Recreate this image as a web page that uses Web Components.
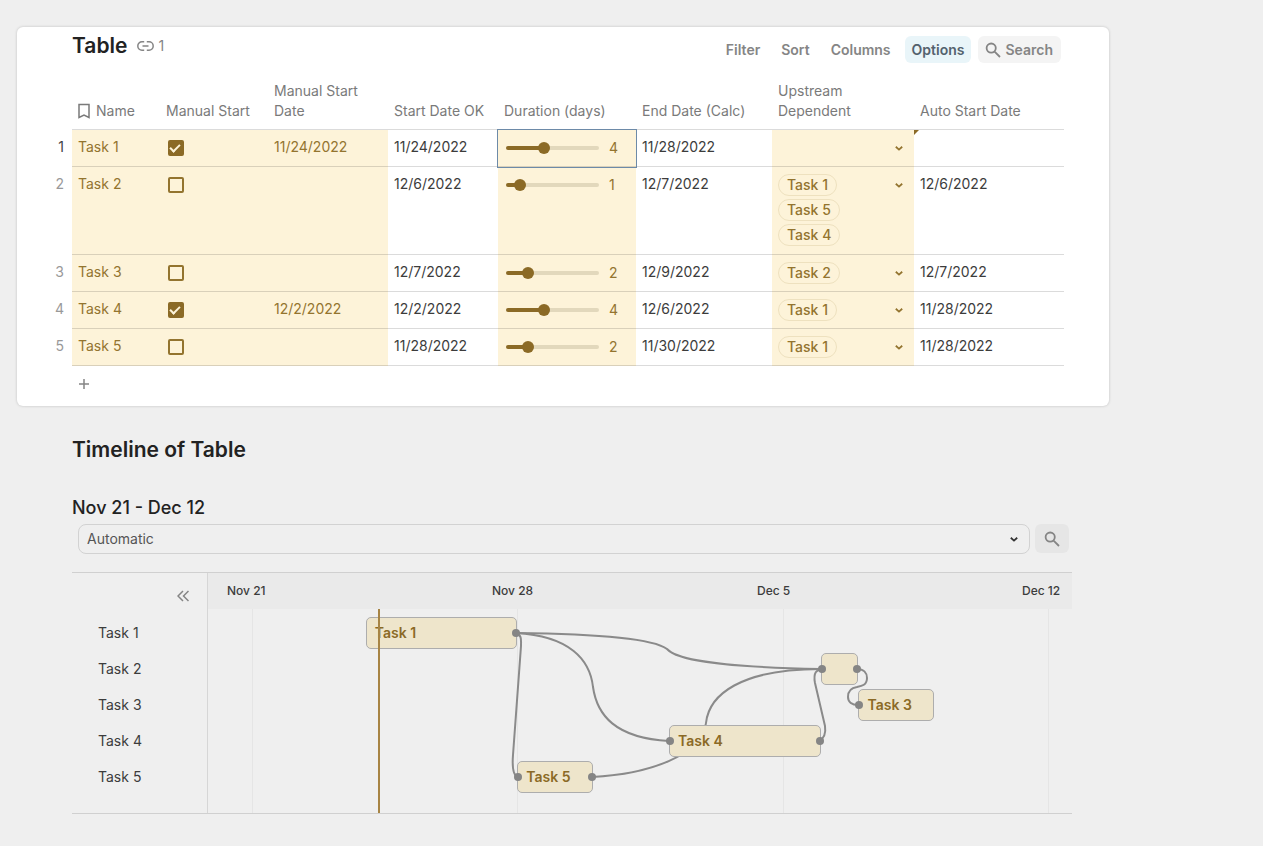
<!DOCTYPE html>
<html lang="en">
<head>
<meta charset="utf-8">
<title>Table and timeline</title>
<style>
    body {
        margin: 0;
        padding: 27px 154px 32px 17px;
        background: #efefef;
        color: #3c3c3c;
        font: 14px/20px Inter, "Liberation Sans", sans-serif;
        --gold: #8b6a26;
        --gold-text: #93742f;
        --cream: #fdf3d9;
        --line: rgba(0, 0, 0, 0.14);
    }
</style>
</head>
<body>
    <main-card>
        <view-title slot="title" links="1">Table</view-title>
        <table-toolbar slot="toolbar"></table-toolbar>
        <task-table></task-table>
    </main-card>
    <timeline-section>
        <view-title slot="title">Timeline of Table</view-title>
        <timeline-filter></timeline-filter>
        <timeline-chart></timeline-chart>
    </timeline-section>

<script>
const tasks = [
    { name: 'Task 1', manual: true, manualDate: '11/24/2022', start: '11/24/2022', days: 4, end: '11/28/2022', upstream: [], auto: '', offset: 3 },
    { name: 'Task 2', manual: false, manualDate: '', start: '12/6/2022', days: 1, end: '12/7/2022', upstream: ['Task 1', 'Task 5', 'Task 4'], auto: '12/6/2022', offset: 15 },
    { name: 'Task 3', manual: false, manualDate: '', start: '12/7/2022', days: 2, end: '12/9/2022', upstream: ['Task 2'], auto: '12/7/2022', offset: 16 },
    { name: 'Task 4', manual: true, manualDate: '12/2/2022', start: '12/2/2022', days: 4, end: '12/6/2022', upstream: ['Task 1'], auto: '11/28/2022', offset: 11 },
    { name: 'Task 5', manual: false, manualDate: '', start: '11/28/2022', days: 2, end: '11/30/2022', upstream: ['Task 1'], auto: '11/28/2022', offset: 7 }
];

const icons = {
    link: { w: 17, h: 12, d: 'M7.2 1.8H5A4.2 4.2 0 0 0 5 10.2H7.2M9.8 1.8H12A4.2 4.2 0 0 1 12 10.2H9.8M5.5 6H11.5' },
    search: { w: 16, h: 16, d: 'M6.2 1.5a4.6 4.6 0 1 0 0 9.2a4.6 4.6 0 1 0 0-9.2M9.6 9.6L15 15' },
    bookmark: { w: 12, h: 16, d: 'M1 1.5H11V14.5L6 12L1 14.5Z' },
    chevron: { w: 10, h: 10, d: 'M1.8 3.8L5 6.6L8.2 3.8' },
    collapse: { w: 12, h: 12, d: 'M6 1L1 6L6 11M11.5 1L6.5 6L11.5 11' },
    plus: { w: 10, h: 10, d: 'M5 0V10M0 5H10' }
};

class UiIcon extends HTMLElement {
    constructor() {
        super();
        this.attachShadow({ mode: 'open' });
    }

    connectedCallback() {
        const { w, h, d } = icons[this.getAttribute('name')];
        this.shadowRoot.innerHTML = `
            <style>
                :host {
                    display: inline-flex;
                    flex: none;
                }

                path {
                    fill: none;
                    stroke: currentColor;
                    stroke-width: var(--stroke, 1.8);
                }
            </style>
            <svg width="${w}" height="${h}" viewBox="0 0 ${w} ${h}" aria-hidden="true"><path d="${d}"/></svg>
        `;
    }
}

customElements.define('ui-icon', UiIcon);


class ViewTitle extends HTMLElement {
    constructor() {
        super();
        this.attachShadow({ mode: 'open' });
    }

    connectedCallback() {
        const links = this.getAttribute('links');
        this.shadowRoot.innerHTML = `
            <style>
                :host {
                    display: flex;
                    align-items: center;
                    gap: 10px;
                }

                h2 {
                    margin: 0;
                    font-size: 21px;
                    line-height: 28px;
                    font-weight: 600;
                    color: #222;
                }

                a {
                    display: flex;
                    align-items: center;
                    gap: 4px;
                    color: #858585;
                    text-decoration: none;
                    --stroke: 1.5;
                }
            </style>
            <h2><slot></slot></h2>
            ${links ? `<a href="#"><ui-icon name="link"></ui-icon>${links}</a>` : ''}
        `;
    }
}

customElements.define('view-title', ViewTitle);


class MainCard extends HTMLElement {
    constructor() {
        super();
        this.attachShadow({ mode: 'open' });
        this.shadowRoot.innerHTML = `
            <style>
                :host {
                    display: block;
                    padding: 5px 45px 5px 27px;
                    background: #fff;
                    border-radius: 6px;
                    box-shadow: 0 0 3px rgba(0, 0, 0, 0.2);
                }

                header {
                    display: flex;
                    justify-content: space-between;
                    align-items: flex-start;
                    padding: 0 3px 0 28px;
                    margin-bottom: 18px;
                }
            </style>
            <header>
                <slot name="title"></slot>
                <slot name="toolbar"></slot>
            </header>
            <slot></slot>
        `;
    }
}

customElements.define('main-card', MainCard);


class TableToolbar extends HTMLElement {
    constructor() {
        super();
        this.attachShadow({ mode: 'open' });
        this.shadowRoot.innerHTML = `
            <style>
                :host {
                    display: flex;
                    gap: 7px;
                    padding-top: 4px;
                }

                button {
                    all: unset;
                    display: flex;
                    align-items: center;
                    gap: 4px;
                    height: 27px;
                    padding: 0 7px;
                    border-radius: 6px;
                    font-weight: 600;
                    color: #858585;
                }

                .active {
                    background: #e9f5f9;
                    color: #54626e;
                }

                .search {
                    padding-right: 8px;
                    background: #f4f4f4;
                }
            </style>
            <button>Filter</button>
            <button>Sort</button>
            <button>Columns</button>
            <button class="active">Options</button>
            <button class="search"><ui-icon name="search"></ui-icon>Search</button>
        `;
    }
}

customElements.define('table-toolbar', TableToolbar);


class DurationSlider extends HTMLElement {
    constructor() {
        super();
        this.attachShadow({ mode: 'open' });
    }

    connectedCallback() {
        const days = this.getAttribute('days');
        const label = this.getAttribute('label');
        this.shadowRoot.innerHTML = `
            <style>
                :host {
                    display: flex;
                    align-items: center;
                    gap: 10px;
                    padding-left: 2px;
                    color: var(--gold-text);
                }

                input {
                    appearance: none;
                    width: 93px;
                    height: 12px;
                    margin: 0;
                    background: none;
                }

                input::-webkit-slider-runnable-track {
                    height: 4px;
                    border-radius: 2px;
                    background: linear-gradient(var(--gold), var(--gold)) 0 0 / var(--fill) 100% no-repeat #e2d8bc;
                }

                input::-webkit-slider-thumb {
                    appearance: none;
                    width: 12px;
                    height: 12px;
                    margin-top: -4px;
                    border-radius: 50%;
                    background: var(--gold);
                }
            </style>
            <input type="range" min="0" max="10" value="${days}" aria-label="${label}">
            <span>${days}</span>
        `;
        const input = this.shadowRoot.querySelector('input');
        const span = this.shadowRoot.querySelector('span');
        const update = () => {
            input.style.setProperty('--fill', `${input.value * 10}%`);
            span.innerText = input.value;
        };
        input.oninput = update;
        update();
    }
}

customElements.define('duration-slider', DurationSlider);


class TaskPicker extends HTMLElement {
    constructor() {
        super();
        this.attachShadow({ mode: 'open' });
        this.shadowRoot.innerHTML = `
            <style>
                :host {
                    display: flex;
                    justify-content: space-between;
                    align-items: flex-start;
                    padding-right: 4px;
                }

                div {
                    display: flex;
                    flex-direction: column;
                    align-items: flex-start;
                    gap: 3px;
                }

                ::slotted(span) {
                    padding: 0 8px;
                    border: 1px solid #eee1bf;
                    border-radius: 11px;
                    font-weight: 500;
                }

                button {
                    all: unset;
                    display: flex;
                    align-items: center;
                    height: 22px;
                }
            </style>
            <div><slot></slot></div>
            <button aria-label="Choose upstream tasks"><ui-icon name="chevron"></ui-icon></button>
        `;
    }
}

customElements.define('task-picker', TaskPicker);


class TaskTable extends HTMLElement {
    constructor() {
        super();
        this.attachShadow({ mode: 'open' });
        this.shadowRoot.innerHTML = `
            <style>
                :host {
                    display: block;
                }

                table {
                    width: 100%;
                    table-layout: fixed;
                    border-spacing: 0;
                }

                th, td {
                    box-sizing: border-box;
                    padding: 7px 6px 0;
                    border-bottom: 1px solid var(--line);
                    text-align: left;
                    vertical-align: top;
                }

                th {
                    padding: 0 6px 8px;
                    vertical-align: bottom;
                    font-weight: 400;
                    color: #7a7a7a;
                }

                td {
                    height: 37px;
                }

                .tall td {
                    height: 88px;
                }

                th.num, td.num {
                    padding-right: 8px;
                    border: 0;
                    text-align: right;
                    color: #999;
                }

                tr:first-child td.num {
                    color: #444;
                }

                .edit {
                    background: var(--cream);
                    color: var(--gold-text);
                }

                .selected {
                    outline: 1px solid #6d8aa8;
                }

                .flag {
                    position: relative;
                }

                .flag::before {
                    content: "";
                    position: absolute;
                    top: 0;
                    left: 0;
                    border-top: 5px solid var(--gold);
                    border-right: 5px solid transparent;
                }

                .name {
                    display: flex;
                    align-items: center;
                    gap: 6px;
                    --stroke: 1.5;
                }

                label {
                    display: flex;
                    align-items: center;
                    height: 22px;
                    padding-left: 2px;
                }

                input {
                    appearance: none;
                    box-sizing: border-box;
                    width: 16px;
                    height: 16px;
                    margin: 0;
                    border: 2px solid var(--gold-text);
                    border-radius: 2px;
                }

                input:checked {
                    background: var(--gold);
                    border-color: var(--gold);
                }

                input:checked::before {
                    content: "";
                    display: block;
                    width: 8px;
                    height: 4px;
                    margin-top: 2px;
                    border: solid var(--cream);
                    border-width: 0 0 2px 2px;
                    transform: rotate(-45deg);
                }

                duration-slider {
                    height: 22px;
                }

                .add {
                    all: unset;
                    display: flex;
                    align-items: center;
                    height: 35px;
                    padding-left: 35px;
                    color: #858585;
                    --stroke: 1.5;
                }
            </style>
            <table>
                <colgroup>
                    <col width="28"><col width="88"><col width="108"><col width="120"><col width="110">
                    <col width="138"><col width="136"><col width="142"><col>
                </colgroup>
                <thead>
                    <tr>
                        <th class="num"></th>
                        <th><span class="name"><ui-icon name="bookmark"></ui-icon>Name</span></th>
                        <th>Manual Start</th>
                        <th>Manual Start Date</th>
                        <th>Start Date OK</th>
                        <th>Duration (days)</th>
                        <th>End Date (Calc)</th>
                        <th>Upstream Dependent</th>
                        <th>Auto Start Date</th>
                    </tr>
                </thead>
                <tbody></tbody>
            </table>
            <button class="add" aria-label="Add row"><ui-icon name="plus"></ui-icon></button>
        `;

        this.shadowRoot.querySelector('tbody').innerHTML = tasks.map((task, i) => `
            <tr class="${task.upstream.length > 1 ? 'tall' : ''}">
                <td class="num">${i + 1}</td>
                <td class="edit">${task.name}</td>
                <td class="edit"><label><input type="checkbox" aria-label="Manual start, ${task.name}" ${task.manual ? 'checked' : ''}></label></td>
                <td class="edit">${task.manualDate}</td>
                <td>${task.start}</td>
                <td class="edit ${i === 0 ? 'selected' : ''}"><duration-slider days="${task.days}" label="Duration, ${task.name}"></duration-slider></td>
                <td>${task.end}</td>
                <td class="edit"><task-picker>${task.upstream.map(name => `<span>${name}</span>`).join('')}</task-picker></td>
                <td class="${i === 0 ? 'flag' : ''}">${task.auto}</td>
            </tr>
        `).join('');
    }
}

customElements.define('task-table', TaskTable);


class TimelineSection extends HTMLElement {
    constructor() {
        super();
        this.attachShadow({ mode: 'open' });
        this.shadowRoot.innerHTML = `
            <style>
                :host {
                    display: block;
                    margin: 30px 37px 0 55px;
                }

                h3 {
                    margin: 32px 0 4px;
                    font-size: 18px;
                    line-height: 24px;
                    font-weight: 500;
                    color: #222;
                }
            </style>
            <slot name="title"></slot>
            <h3>Nov 21 - Dec 12</h3>
            <slot></slot>
        `;
    }
}

customElements.define('timeline-section', TimelineSection);


class TimelineFilter extends HTMLElement {
    constructor() {
        super();
        this.attachShadow({ mode: 'open' });
        this.shadowRoot.innerHTML = `
            <style>
                :host {
                    display: flex;
                    gap: 5px;
                    padding: 0 3px 0 6px;
                    margin-bottom: 18px;
                }

                .field {
                    flex: 1;
                    display: grid;
                    align-items: center;
                }

                select, ui-icon {
                    grid-area: 1 / 1;
                }

                select {
                    appearance: none;
                    height: 30px;
                    padding: 0 8px;
                    border: 1px solid #d2d2d2;
                    border-radius: 8px;
                    background: none;
                    font: inherit;
                    color: #555;
                }

                .field ui-icon {
                    justify-self: end;
                    margin-right: 11px;
                    color: #333;
                    pointer-events: none;
                }

                button {
                    all: unset;
                    display: flex;
                    align-items: center;
                    justify-content: center;
                    width: 34px;
                    height: 29px;
                    border-radius: 6px;
                    background: #e6e6e6;
                    color: #858585;
                }
            </style>
            <div class="field">
                <select aria-label="Zoom level"><option>Automatic</option></select>
                <ui-icon name="chevron"></ui-icon>
            </div>
            <button aria-label="Search"><ui-icon name="search"></ui-icon></button>
        `;
    }
}

customElements.define('timeline-filter', TimelineFilter);


class TimelineChart extends HTMLElement {
    constructor() {
        super();
        this.attachShadow({ mode: 'open' });
        this.shadowRoot.innerHTML = `
            <style>
                :host {
                    display: grid;
                    grid-template-columns: 136px 1fr;
                    border-top: 1px solid #d0d0d0;
                    border-bottom: 1px solid #d0d0d0;
                }

                .names {
                    border-right: 1px solid #d6d6d6;
                }

                .collapse {
                    all: unset;
                    display: flex;
                    align-items: center;
                    justify-content: flex-end;
                    width: 117px;
                    height: 46px;
                    color: #858585;
                    --stroke: 1.5;
                }

                ul {
                    margin: -4px 0 0;
                    padding: 0 0 16px 26px;
                    list-style: none;
                    line-height: 36px;
                }

                .weeks {
                    display: grid;
                    grid-template-columns: repeat(3, 1fr) 50px;
                    padding-left: 19px;
                    background: #eaeaea;
                    font-size: 12px;
                    line-height: 36px;
                    font-weight: 500;
                }

                .canvas {
                    position: relative;
                    display: grid;
                    grid-template-columns: repeat(21, 1fr);
                    grid-auto-rows: 32px;
                    row-gap: 4px;
                    margin: 0 24px 0 44px;
                    padding: 8px 0 20px;
                }

                svg, .tick, .today {
                    position: absolute;
                    top: 0;
                    height: 100%;
                }

                svg {
                    left: 0;
                    width: 100%;
                    overflow: visible;
                }

                path {
                    fill: none;
                    stroke: #8a8a8a;
                    stroke-width: 2;
                    vector-effect: non-scaling-stroke;
                }

                .tick {
                    width: 1px;
                    background: #e5e5e5;
                }

                .today {
                    left: 16%;
                    width: 2px;
                    margin-left: -1px;
                    background: #a78444;
                }

                .bar {
                    position: relative;
                    box-sizing: border-box;
                    padding-left: 8px;
                    border: 1px solid #adadad;
                    border-radius: 5px;
                    background: #eee5cb;
                    color: var(--gold);
                    font-weight: 600;
                    line-height: 30px;
                }

                .in::before, .out::after {
                    content: "";
                    position: absolute;
                    top: 11px;
                    width: 8px;
                    height: 8px;
                    border-radius: 50%;
                    background: #858585;
                }

                .in::before {
                    left: -4px;
                }

                .out::after {
                    right: -4px;
                }
            </style>
            <div class="names">
                <button class="collapse" aria-label="Hide names"><ui-icon name="collapse"></ui-icon></button>
                <ul>${tasks.map(task => `<li>${task.name}</li>`).join('')}</ul>
            </div>
            <div>
                <div class="weeks"><span>Nov 21</span><span>Nov 28</span><span>Dec 5</span><span>Dec 12</span></div>
                <div class="canvas">
                    ${[0, 1, 2, 3].map(week => `<div class="tick" style="left: calc(100% * ${week} / 3)"></div>`).join('')}
                    <svg viewBox="0 0 796 204" preserveAspectRatio="none" aria-hidden="true">
                        <path d="M264 24C358 25 403 31 415 40C424 50 460 58 569 60"/>
                        <path d="M264 24C318 27 338 51 341 78C345 106 363 129 417 132"/>
                        <path d="M264 24C270 26 269 31 269 37L261 146C260 159 261 167 266 168"/>
                        <path d="M340 168C398 165 450 146 454 114C457 86 488 60 569 60"/>
                        <path d="M567 132C573 129 574 124 573 117L563 74C561 63 565 61 569 60"/>
                        <path d="M605 60C612 60 615 64 615 69C615 76 610 77 605 78C598 79 596 83 596 88C596 93 600 96 606 96"/>
                    </svg>
                    ${tasks.map((task, i) => this.#bar(task, i)).join('')}
                    <div class="today"></div>
                </div>
            </div>
        `;
    }

    #bar(task, i) {
        const hasNext = tasks.some(other => other.upstream.includes(task.name));
        const classes = ['bar', task.upstream.length ? 'in' : '', hasNext ? 'out' : ''].join(' ');
        // one-day bars are too narrow for their name
        const label = task.days > 1 ? task.name : '';
        return `<div class="${classes}" style="grid-area: ${i + 1} / ${task.offset + 1} / auto / span ${task.days}">${label}</div>`;
    }
}

customElements.define('timeline-chart', TimelineChart);
</script>
</body>
</html>
